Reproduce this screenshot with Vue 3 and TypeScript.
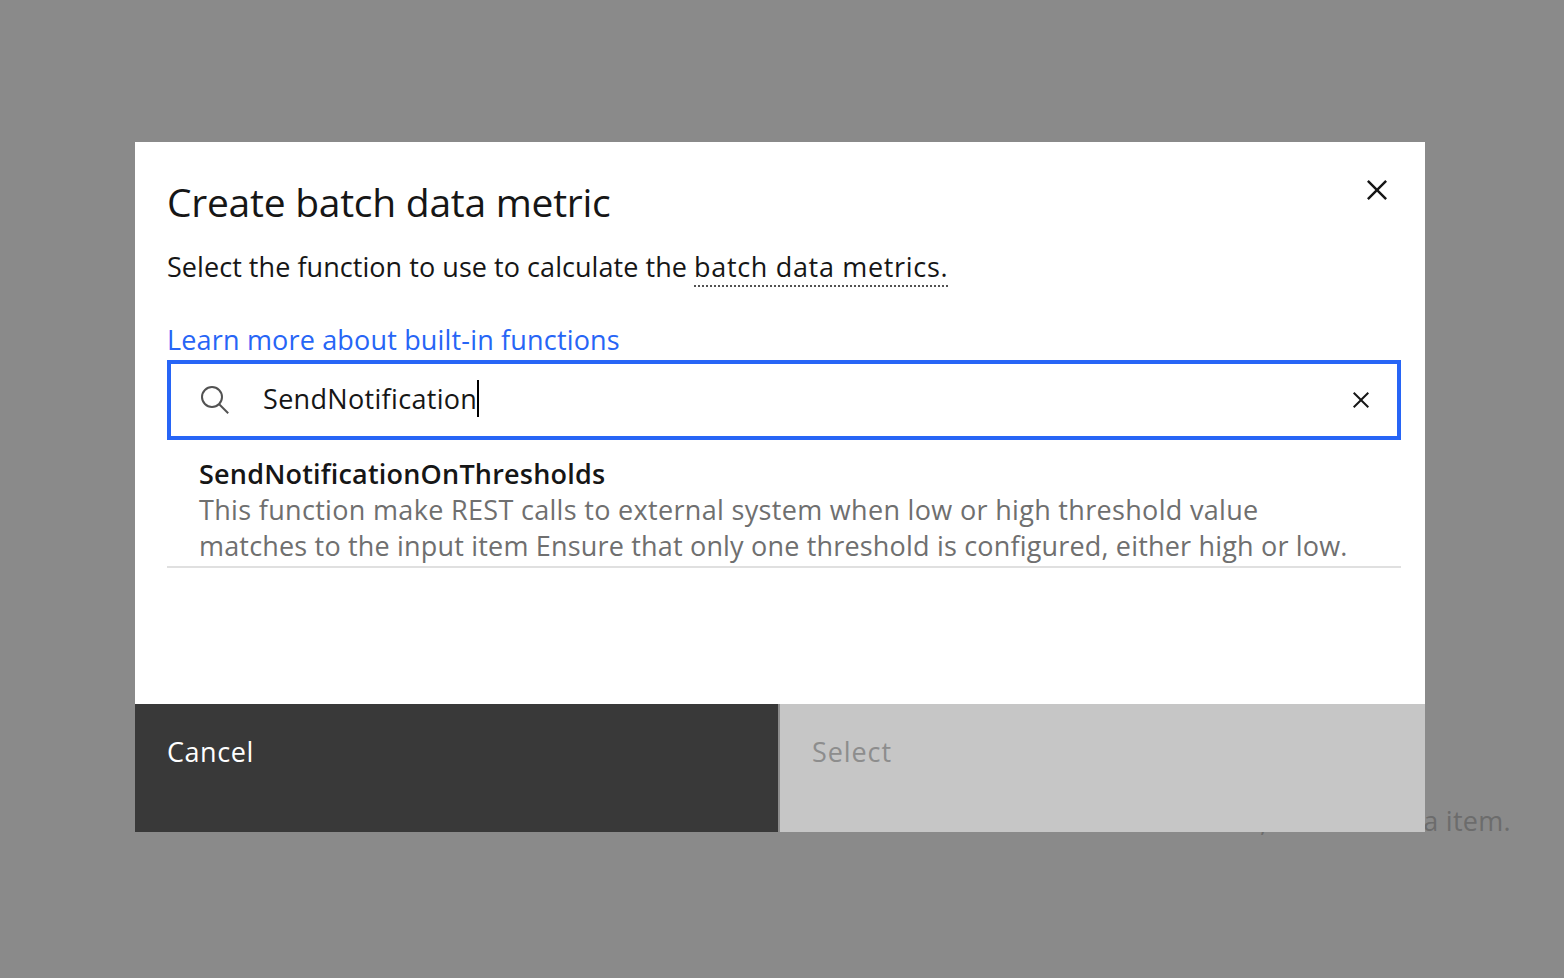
<script setup lang="ts">
import { ref } from 'vue'

interface BuiltInFunction {
  name: string
  description: string[]
}

const query = ref('SendNotification')

const functions: BuiltInFunction[] = [
  {
    name: 'SendNotificationOnThresholds',
    description: [
      'This function make REST calls to external system when low or high threshold value',
      'matches to the input item Ensure that only one threshold is configured, either high or low.',
    ],
  },
]
</script>

<template>
  <div class="page">
    <p class="backdrop-text"><span>,</span><span>a item.</span></p>

    <section class="modal" role="dialog" aria-modal="true">
      <div class="content">
        <header class="header">
          <h1 class="title">Create batch data metric</h1>
          <button class="close" type="button" aria-label="Close">
            <svg width="40" height="40" viewBox="0 0 32 32">
              <path d="M24 9.4L22.6 8 16 14.6 9.4 8 8 9.4l6.6 6.6L8 22.6 9.4 24l6.6-6.6 6.6 6.6 1.4-1.4-6.6-6.6z" />
            </svg>
          </button>
        </header>
        <p class="intro">
          <span class="intro-lead">Select the function to use to calculate the</span>
          <span class="term">batch data metrics.</span>
        </p>
        <a class="learn">Learn more about built-in functions</a>
        <div class="search">
          <svg class="magnifier" width="32" height="32" viewBox="0 0 32 32">
            <circle cx="13" cy="13" r="10" />
            <path d="M20.2 20.2L29.2 29.2" />
          </svg>
          <span class="query">{{ query }}</span>
          <span class="caret"></span>
          <button class="clear" type="button" aria-label="Clear">
            <svg width="32" height="32" viewBox="0 0 32 32">
              <path d="M24 9.4L22.6 8 16 14.6 9.4 8 8 9.4l6.6 6.6L8 22.6 9.4 24l6.6-6.6 6.6 6.6 1.4-1.4-6.6-6.6z" />
            </svg>
          </button>
        </div>
        <ul class="results">
          <li v-for="fn in functions" :key="fn.name" class="result">
            <strong class="name">{{ fn.name }}</strong>
            <span
              v-for="(line, i) in fn.description"
              :key="i"
              class="line"
              :class="{ last: i === fn.description.length - 1 }"
            >{{ line }}</span>
          </li>
        </ul>
      </div>
      <footer class="footer">
        <button class="btn cancel" type="button">Cancel</button>
        <button class="btn select" type="button" disabled>Select</button>
      </footer>
    </section>
  </div>
</template>

<style>
html,
body {
  margin: 0;
  overflow: hidden;
}
</style>

<style scoped>
.page {
  position: relative;
  box-sizing: border-box;
  width: 1564px;
  height: 978px;
  padding: 142px 0 0 135px;
  overflow: hidden;
  background: #8a8a8a;
  color: #161616;
  font-family: 'Open Sans', 'Noto Sans', sans-serif;
  font-size: 27px;
  line-height: 36px;
  font-variant-ligatures: none;
}

.backdrop-text {
  position: absolute;
  top: 803px;
  left: 1260px;
  display: flex;
  justify-content: space-between;
  width: 251px;
  margin: 0;
  color: #6c6c6c;
  letter-spacing: 0.3px;
}

.modal {
  position: relative;
  display: flex;
  flex-direction: column;
  width: 1290px;
  height: 690px;
  background: #fff;
}

.content {
  display: flex;
  flex: 1;
  flex-direction: column;
  align-items: flex-start;
  padding: 36px 24px 0 32px;
}

.header {
  display: flex;
  justify-content: space-between;
  width: 100%;
  height: 48px;
}

.title {
  margin: 0;
  font-size: 39px;
  font-weight: 400;
  line-height: 48px;
  letter-spacing: -0.26px;
  white-space: nowrap;
}

button {
  padding: 0;
  border: 0;
  background: none;
  font: inherit;
}

.close {
  width: 40px;
  height: 40px;
  margin: -8px 4px 0 0;
}

.close svg,
.clear svg {
  display: block;
  fill: #161616;
}

.intro {
  display: flex;
  margin: 23px 0 0;
  white-space: nowrap;
}

.intro-lead {
  width: 527px;
  letter-spacing: 0.05px;
}

.term {
  height: 36px;
  border-bottom: 2px dotted #525252;
  letter-spacing: 0.68px;
}

.learn {
  margin-top: 35px;
  height: 38px;
  color: #2765f6;
  letter-spacing: 0.17px;
  white-space: nowrap;
}

.search {
  display: flex;
  align-items: center;
  box-sizing: border-box;
  width: 1234px;
  height: 80px;
  border: 4px solid #2765f6;
  padding: 0 20px 0 28px;
}

.magnifier {
  margin-right: 32px;
  fill: none;
  stroke: #525252;
  stroke-width: 2;
}

.query {
  margin-top: -2px;
  letter-spacing: 0.32px;
}

.caret {
  width: 2px;
  height: 37px;
  margin-top: -3px;
  background: #000;
}

.clear {
  margin-left: auto;
}

.results {
  width: 1234px;
  margin: 0;
  padding: 0;
  list-style: none;
}

.result {
  display: flex;
  flex-direction: column;
  align-items: flex-start;
  box-sizing: border-box;
  height: 128px;
  padding: 16px 0 0 32px;
  border-bottom: 2px solid #e0e0e0;
  white-space: nowrap;
}

.name {
  font-weight: 600;
  letter-spacing: 0.2px;
}

.line {
  color: #6f6f6f;
  letter-spacing: 0.32px;
}

.line.last {
  letter-spacing: 0.18px;
}

.footer {
  display: flex;
  height: 128px;
}

.btn {
  display: flex;
  align-items: flex-start;
  box-sizing: border-box;
  padding: 30px 32px 0;
}

.cancel {
  width: 643px;
  background: #393939;
  color: #fff;
  letter-spacing: 0.55px;
}

.select {
  flex: 1;
  border-left: 2px solid #8d8d8d;
  background: #c6c6c6;
  color: #8d8d8d;
  letter-spacing: 0.9px;
}
</style>
